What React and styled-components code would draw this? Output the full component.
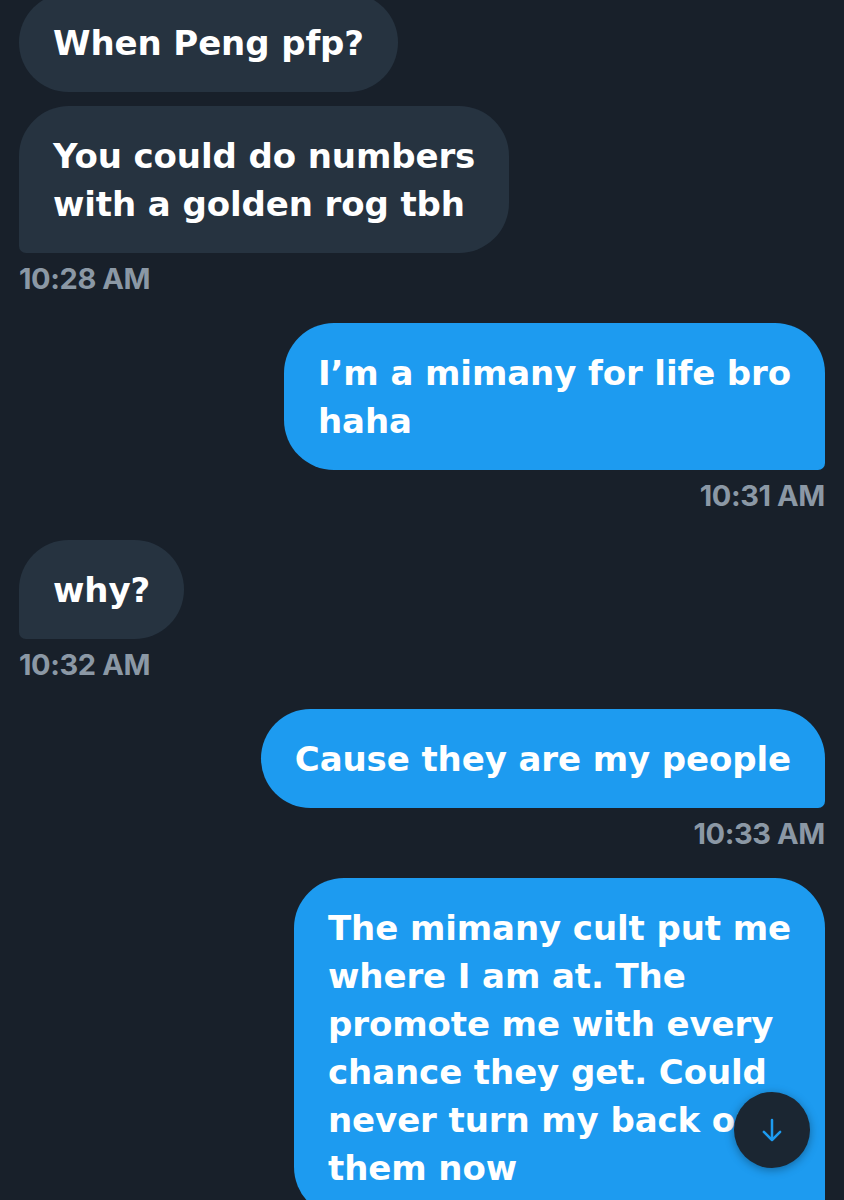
import styled, { createGlobalStyle } from "styled-components";

const GlobalStyle = createGlobalStyle`
  html, body {
    margin: 0;
    padding: 0;
    background: #18202a;
  }
  body {
    font-family: "DejaVu Sans", Inter, "Liberation Sans", sans-serif;
    -webkit-font-smoothing: antialiased;
  }
`;

const messages = [
  { id: 1, mine: false, lines: ["When Peng pfp?"], tail: false },
  {
    id: 2,
    mine: false,
    lines: ["You could do numbers", "with a golden rog tbh"],
    tail: true,
    time: "10:28 AM",
  },
  {
    id: 3,
    mine: true,
    lines: ["I’m a mimany for life bro", "haha"],
    tail: true,
    time: "10:31 AM",
  },
  { id: 4, mine: false, lines: ["why?"], tail: true, time: "10:32 AM" },
  {
    id: 5,
    mine: true,
    lines: ["Cause they are my people"],
    tail: true,
    time: "10:33 AM",
  },
  {
    id: 6,
    mine: true,
    lines: [
      "The mimany cult put me",
      "where I am at. The",
      "promote me with every",
      "chance they get. Could",
      "never turn my back on",
      "them now",
    ],
    tail: true,
  },
];

const App = () => {
  return (
    <>
      <GlobalStyle />
      <Screen>
        <Thread>
          {messages.map((m) => (
            <Entry key={m.id} $mine={m.mine} $stamped={!!m.time}>
              <Bubble $mine={m.mine} $tail={m.tail}>
                {m.lines.map((line, i) => (
                  <Line key={i}>{line}</Line>
                ))}
              </Bubble>
              {m.time && <Stamp>{m.time}</Stamp>}
            </Entry>
          ))}
        </Thread>
        <ScrollDown aria-label="Scroll to bottom">
          <svg
            width="30"
            height="30"
            viewBox="0 0 24 24"
            fill="none"
            stroke="#1d9bf0"
            strokeWidth="2"
            strokeLinecap="round"
            strokeLinejoin="round"
          >
            <path d="M12 4v15.5" />
            <path d="M5.5 13.5L12 20l6.5-6.5" />
          </svg>
        </ScrollDown>
      </Screen>
    </>
  );
};

const Screen = styled.div`
  position: relative;
  width: 844px;
  height: 1200px;
  overflow: hidden;
  background: #18202a;
`;

const Thread = styled.div`
  display: flex;
  flex-direction: column;
  padding: 0 19px;
  margin-top: -7px;
`;

const Entry = styled.div`
  display: flex;
  flex-direction: column;
  align-items: ${(p) => (p.$mine ? "flex-end" : "flex-start")};
  margin-bottom: ${(p) => (p.$stamped ? "28px" : "14px")};
`;

const Bubble = styled.div`
  padding: 26px 34px 25px;
  background: ${(p) => (p.$mine ? "#1d9bf0" : "#263340")};
  color: #ffffff;
  border-radius: 50px;
  ${(p) =>
    p.$tail &&
    (p.$mine
      ? "border-bottom-right-radius: 7px;"
      : "border-bottom-left-radius: 7px;")}
  font-size: 34px;
  font-weight: 700;
  line-height: 48px;
  letter-spacing: -0.1px;
`;

const Line = styled.div`
  white-space: nowrap;
`;

const Stamp = styled.span`
  margin-top: 10px;
  font-family: Inter, "Liberation Sans", sans-serif;
  font-size: 29px;
  line-height: 32px;
  font-weight: 700;
  letter-spacing: -0.4px;
  color: #8b98a5;
`;

const ScrollDown = styled.button`
  position: absolute;
  left: 734px;
  top: 1092px;
  width: 76px;
  height: 76px;
  border: none;
  border-radius: 50%;
  background: #1b2632;
  box-shadow: 0 2px 10px rgba(0, 0, 0, 0.35);
  display: flex;
  align-items: center;
  justify-content: center;
  padding: 0;
`;

export default App;
